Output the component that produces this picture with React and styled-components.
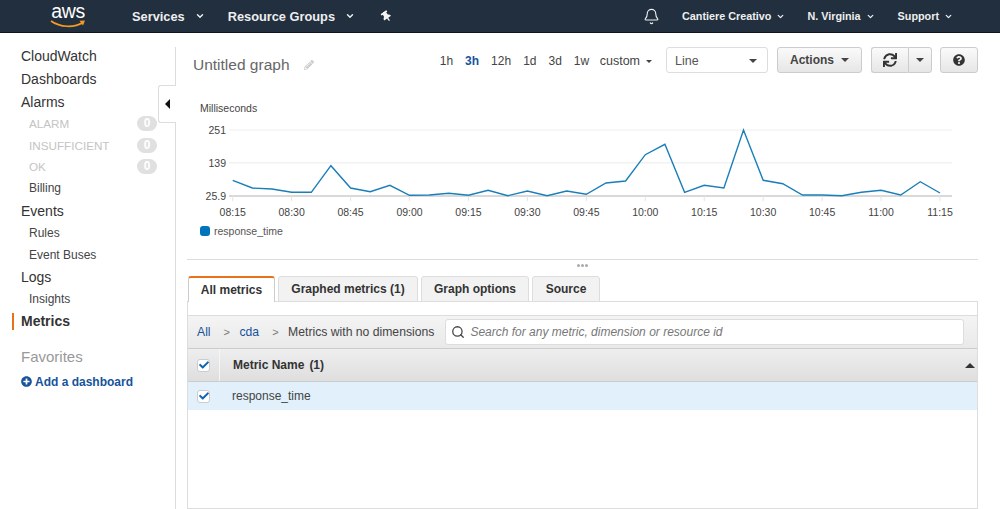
import styled, { createGlobalStyle } from 'styled-components';
import {
  FaCheck,
  FaPencilAlt,
  FaPlusCircle,
  FaQuestionCircle,
  FaSync,
  FaThumbtack,
} from 'react-icons/fa';
import { Bell, ChevronDown, Search } from 'lucide-react';

const GlobalStyle = createGlobalStyle`
  html, body {
    margin: 0;
    padding: 0;
    background: #fff;
  }
  body {
    font-family: "Liberation Sans", Arial, sans-serif;
    color: #444;
  }
`;

const Page = styled.div`
  width: 1000px;
  height: 509px;
  overflow: hidden;
  display: flex;
  flex-direction: column;
`;

const TopBar = styled.header`
  height: 32px;
  flex: none;
  display: flex;
  align-items: center;
  background: #212f3e;
  border-bottom: 1px solid #10161d;
  color: #eee;
  font-weight: bold;
`;

const Logo = styled.div`
  width: 40px;
  align-self: flex-start;
  margin: 0 44px 0 48px;
  display: flex;
  flex-direction: column;
  align-items: center;
  color: #fff;
  svg {
    display: block;
    margin-top: -4px;
  }
`;

const LogoText = styled.span`
  font-weight: normal;
  font-size: 19.5px;
  letter-spacing: -0.4px;
`;

const TopItem = styled.div`
  display: flex;
  align-items: center;
  gap: ${(p) => p.$gap || 5}px;
  margin-right: ${(p) => p.$right || 0}px;
  font-size: ${(p) => p.$size || 10.8}px;
  white-space: nowrap;
`;

const TopRight = styled.div`
  margin-left: auto;
  display: flex;
  align-items: center;
  padding-right: 47px;
`;

const PinIcon = styled(FaThumbtack)`
  width: 11px;
  height: 11px;
  color: #f4f4f4;
  transform: rotate(-35deg);
`;

const BellIcon = styled(Bell)`
  width: 17px;
  height: 17px;
  color: #eee;
  margin-right: 22px;
`;

const Body = styled.div`
  flex: 1;
  min-height: 0;
  display: flex;
`;

const Sidebar = styled.aside`
  position: relative;
  width: 175px;
  flex: none;
  margin-top: 14px;
  border-right: 1px solid #ddd;
`;

const SideList = styled.nav`
  margin-top: -2px;
  padding-right: 18px;
`;

const SideLink = styled.div`
  position: relative;
  height: 23px;
  line-height: 23px;
  padding-left: 21px;
  font-size: 14px;
  font-weight: ${(p) => (p.$active ? 'bold' : 'normal')};
  margin-top: ${(p) => (p.$active ? '-1px' : '0')};
  color: #333;

  ${(p) =>
    p.$active &&
    `
    &::before {
      content: '';
      position: absolute;
      left: 12px;
      top: 3px;
      width: 2px;
      height: 17px;
      background: #e8711a;
    }
  `}
`;

const SideGroup = styled.div`
  margin-top: -1px;
  padding-bottom: 1px;
`;

const SideSubLink = styled.div`
  height: 21.5px;
  line-height: 21.5px;
  padding-left: 29px;
  font-size: ${(p) => (p.$muted ? '11.7px' : '12px')};
  display: flex;
  align-items: center;
  justify-content: space-between;
  color: ${(p) => (p.$muted ? '#c4c4c4' : '#444')};
`;

const Badge = styled.span`
  width: 20px;
  height: 15px;
  border-radius: 8px;
  background: #e0e0e0;
  color: #fff;
  font-size: 12px;
  font-weight: bold;
  line-height: 15px;
  text-align: center;
`;

const FavoritesTitle = styled.div`
  margin-top: 12px;
  height: 23px;
  line-height: 23px;
  padding-left: 21px;
  font-size: 15px;
  color: #999;
`;

const AddLink = styled.div`
  margin-top: 5px;
  padding-left: 21px;
  height: 18px;
  display: flex;
  align-items: center;
  gap: 3px;
  font-size: 12px;
  font-weight: bold;
  color: #16539b;
  svg {
    width: 11px;
    height: 11px;
  }
`;

const CollapseTab = styled.div`
  position: absolute;
  top: 38px;
  right: -1px;
  width: 17px;
  height: 36px;
  background: #fff;
  border: 1px solid #ddd;
  border-right: none;
  border-radius: 3px 0 0 3px;
  display: flex;
  align-items: center;
  justify-content: center;
  &::after {
    content: '';
    border-top: 5px solid transparent;
    border-bottom: 5px solid transparent;
    border-right: 5px solid #111;
  }
`;

const Main = styled.main`
  flex: 1;
  min-width: 0;
  padding: 14px 22px 0 11px;
  display: flex;
  flex-direction: column;
`;

const Toolbar = styled.div`
  height: 26px;
  display: flex;
  align-items: center;
  justify-content: space-between;
`;

const TitleGroup = styled.div`
  padding-left: 6px;
  display: flex;
  align-items: center;
  gap: 14px;
  margin-top: 9px;
  color: #666;
  font-size: 15.5px;
  svg {
    width: 10px;
    height: 10px;
    color: #ccc;
  }
`;

const Controls = styled.div`
  display: flex;
  align-items: center;
`;

const TimeRange = styled.div`
  display: flex;
  align-items: center;
  gap: 12px;
  margin-right: 14px;
  padding-top: 2px;
  font-size: 12px;
  color: #444;
`;

const TimeOption = styled.span`
  font-weight: ${(p) => (p.$active ? 'bold' : 'normal')};
  color: ${(p) => (p.$active ? '#16539b' : '#444')};
`;

const Caret = styled.span`
  display: inline-block;
  width: 0;
  height: 0;
  border-left: ${(p) => p.$size || 4}px solid transparent;
  border-right: ${(p) => p.$size || 4}px solid transparent;
  border-top: ${(p) => p.$size || 4}px solid ${(p) => p.$color || '#444'};
`;

const CustomRange = styled.span`
  margin-left: -1.5px;
  display: flex;
  align-items: center;
  gap: 6px;
  font-size: 12.5px;
`;

const SelectBox = styled.div`
  width: 102px;
  height: 26px;
  box-sizing: border-box;
  margin-right: 9px;
  padding: 2px 10px 0 8px;
  display: flex;
  align-items: center;
  justify-content: space-between;
  background: #fff;
  border: 1px solid #ddd;
  border-radius: 3px;
  font-size: 12.5px;
  color: #555;
`;

const Button = styled.div`
  width: ${(p) => p.$width}px;
  height: 26px;
  box-sizing: border-box;
  margin-right: ${(p) => p.$right || 0}px;
  display: flex;
  align-items: center;
  justify-content: center;
  gap: 7px;
  background: linear-gradient(#fafafa, #e6e6e6);
  border: 1px solid #ccc;
  border-radius: ${(p) => p.$radius || '3px'};
  font-size: 12px;
  font-weight: bold;
  color: #444;
  svg {
    width: ${(p) => p.$icon || 12}px;
    height: ${(p) => p.$icon || 12}px;
    color: #333;
  }
`;

const SplitLeft = styled(Button)`
  border-right: none;
  border-radius: 3px 0 0 3px;
`;

const SplitRight = styled(Button)`
  border-radius: 0 3px 3px 0;
`;

const AxisTitle = styled.div`
  margin-top: 28px;
  padding-left: 13px;
  height: 14px;
  line-height: 14px;
  font-size: 10.5px;
  color: #444;
`;

const ChartSvg = styled.svg`
  display: block;
  width: 791px;
  height: 105px;
  flex: none;

  text {
    font-family: "Liberation Sans", Arial, sans-serif;
    font-size: 10.5px;
    fill: #444;
  }
`;

const Legend = styled.div`
  margin-top: 4px;
  padding-left: 13px;
  height: 14px;
  display: flex;
  align-items: center;
  gap: 4px;
  font-size: 10.5px;
  color: #555;
`;

const LegendSwatch = styled.span`
  width: 10px;
  height: 10px;
  border-radius: 3px;
  background: #0073bb;
`;

const Divider = styled.div`
  margin-top: 21px;
  height: 1px;
  flex: none;
  background: #ddd;
`;

const ResizeHandle = styled.div`
  height: 16px;
  flex: none;
  display: flex;
  justify-content: center;
  align-items: center;
  gap: 1px;
  padding-bottom: 6px;
  box-sizing: border-box;
`;

const HandleDot = styled.span`
  width: 3px;
  height: 3px;
  border-radius: 50%;
  background: #aaa;
`;

const TabRow = styled.div`
  height: 26px;
  flex: none;
  padding-left: 1px;
  display: flex;
  gap: 3px;
  position: relative;
  z-index: 1;
`;

const Tab = styled.div`
  width: ${(p) => p.$width}px;
  box-sizing: border-box;
  display: flex;
  align-items: center;
  justify-content: center;
  font-size: 12px;
  font-weight: bold;
  color: #333;
  background: ${(p) => (p.$active ? '#fff' : '#f2f2f2')};
  border: 1px solid ${(p) => (p.$active ? '#ccc' : '#ddd')};
  border-top: ${(p) => (p.$active ? '2px solid #e8711a' : '1px solid #ddd')};
  border-bottom: ${(p) => (p.$active ? 'none' : '1px solid #ddd')};
  border-radius: 3px 3px 0 0;
`;

const Panel = styled.section`
  flex: 1;
  margin-top: -1px;
  padding-top: 13px;
  border: 1px solid #ddd;
  display: flex;
  flex-direction: column;
`;

const CrumbBar = styled.div`
  height: 34px;
  flex: none;
  box-sizing: border-box;
  padding: 0 13px 0 9px;
  display: flex;
  align-items: center;
  background: linear-gradient(#f4f4f4, #e9e9e9);
  border-top: 1px solid #ddd;
  border-bottom: 1px solid #ccc;
  font-size: 12.2px;
  color: #444;
`;

const CrumbLink = styled.span`
  color: #16539b;
`;

const CrumbSep = styled.span`
  margin: 0 9.5px 0 13px;
  color: #777;
  font-size: 11px;
`;

const SearchBox = styled.div`
  flex: 1;
  height: 26px;
  margin-left: 11px;
  box-sizing: border-box;
  padding-left: 5px;
  display: flex;
  align-items: center;
  gap: 5px;
  background: #fff;
  border: 1px solid #ddd;
  border-radius: 3px;
  font-size: 12px;
  font-style: italic;
  color: #777;
  svg {
    width: 14px;
    height: 14px;
    color: #444;
  }
`;

const HeadRow = styled.div`
  height: 33px;
  flex: none;
  box-sizing: border-box;
  display: flex;
  align-items: center;
  background: linear-gradient(#eeeeee, #dedede);
  border-bottom: 1px solid #ccc;
  font-size: 12px;
  font-weight: bold;
  color: #333;
`;

const CheckCell = styled.div`
  width: 31px;
  height: 100%;
  flex: none;
  display: flex;
  align-items: center;
  justify-content: center;
  border-right: ${(p) => (p.$divided ? '1px solid #f6f6f6' : 'none')};
`;

const CheckBox = styled.span`
  width: 13px;
  height: 13px;
  box-sizing: border-box;
  display: flex;
  align-items: center;
  justify-content: center;
  background: #fff;
  border: 1px solid #ccc;
  border-radius: 3px;
  svg {
    width: 10px;
    height: 10px;
    color: #0b64b4;
  }
`;

const HeadLabel = styled.div`
  flex: 1;
  padding-left: 13px;
  display: flex;
  gap: 5px;
`;

const SortCaret = styled.span`
  margin-right: 2px;
  width: 0;
  height: 0;
  border-left: 5px solid transparent;
  border-right: 5px solid transparent;
  border-bottom: 5px solid #333;
`;

const MetricRow = styled.div`
  height: 28px;
  flex: none;
  display: flex;
  align-items: center;
  background: #e1f0fb;
  font-size: 12px;
  color: #444;
`;

const MetricName = styled.span`
  padding-left: 13px;
`;

// page coordinates, one point every 5 minutes from 08:15
const series = [
  180.3, 188, 189, 192.3, 192.3, 165.7, 188, 191.7, 185.3, 195.3, 195, 193.3,
  195.3, 190.3, 195.7, 191, 195.7, 191, 194.3, 183, 181, 154.7, 144.3, 192.3,
  185.3, 188, 130, 180.3, 183.7, 195, 195, 195.7, 192.3, 190.3, 195, 181.7, 193,
];
const stepX = 19.647;
const startX = 232.7;
const linePoints = series
  .map((y, i) => `${(startX + i * stepX).toFixed(1)},${y}`)
  .join(' ');
const hours = [
  '08:15', '08:30', '08:45', '09:00', '09:15', '09:30', '09:45',
  '10:00', '10:15', '10:30', '10:45', '11:00', '11:15',
];

const Chart = () => (
  <ChartSvg viewBox="187 115 791 105">
    <line x1="229" x2="952" y1="130" y2="130" stroke="#eeeeee" />
    <line x1="229" x2="952" y1="162.7" y2="162.7" stroke="#f2f2f2" strokeWidth="1.5" />
    <line x1="229" x2="952" y1="196" y2="196" stroke="#cccccc" strokeWidth="1.5" />
    <text x="226" y="134" textAnchor="end">251</text>
    <text x="226" y="167" textAnchor="end">139</text>
    <text x="226" y="200" textAnchor="end">25.9</text>
    {hours.map((h, i) => {
      const x = startX + i * 3 * stepX;
      return (
        <g key={h}>
          <line x1={x} x2={x} y1="196" y2="201" stroke="#e4e4e4" />
          <text x={x} y="216" textAnchor="middle">{h}</text>
        </g>
      );
    })}
    <polyline points={linePoints} fill="none" stroke="#1a7fb9" strokeWidth="1.4" />
  </ChartSvg>
);

const App = () => {
  return (
    <Page>
      <GlobalStyle />
      <TopBar>
        <Logo>
          <LogoText>aws</LogoText>
          <svg width="36" height="10" viewBox="0 0 36 10">
            <path d="M1 2 C10 8.5 24 9 33 3.5" fill="none" stroke="#f29a24" strokeWidth="1.7" />
            <path d="M29.5 1.8 L35 1.5 L33 6.5 Z" fill="#f29a24" />
          </svg>
        </Logo>
        <TopItem $size={12.8} $gap={10} $right={23}>
          Services <ChevronDown size={10} strokeWidth={3.5} />
        </TopItem>
        <TopItem $size={12.8} $gap={10} $right={26}>
          Resource Groups <ChevronDown size={10} strokeWidth={3.5} />
        </TopItem>
        <PinIcon />
        <TopRight>
          <BellIcon strokeWidth={1.6} />
          <TopItem $right={22}>
            Cantiere Creativo <ChevronDown size={9} strokeWidth={3.5} />
          </TopItem>
          <TopItem $right={23}>
            N. Virginia <ChevronDown size={9} strokeWidth={3.5} />
          </TopItem>
          <TopItem>
            Support <ChevronDown size={9} strokeWidth={3.5} />
          </TopItem>
        </TopRight>
      </TopBar>
      <Body>
        <Sidebar>
          <SideList>
            <SideLink>CloudWatch</SideLink>
            <SideLink>Dashboards</SideLink>
            <SideLink>Alarms</SideLink>
            <SideGroup>
              <SideSubLink $muted>ALARM <Badge>0</Badge></SideSubLink>
              <SideSubLink $muted>INSUFFICIENT <Badge>0</Badge></SideSubLink>
              <SideSubLink $muted>OK <Badge>0</Badge></SideSubLink>
              <SideSubLink>Billing</SideSubLink>
            </SideGroup>
            <SideLink>Events</SideLink>
            <SideSubLink>Rules</SideSubLink>
            <SideSubLink>Event Buses</SideSubLink>
            <SideLink>Logs</SideLink>
            <SideSubLink>Insights</SideSubLink>
            <SideLink $active>Metrics</SideLink>
            <FavoritesTitle>Favorites</FavoritesTitle>
            <AddLink><FaPlusCircle /> Add a dashboard</AddLink>
          </SideList>
          <CollapseTab />
        </Sidebar>
        <Main>
          <Toolbar>
            <TitleGroup>
              Untitled graph <FaPencilAlt />
            </TitleGroup>
            <Controls>
              <TimeRange>
                <TimeOption>1h</TimeOption>
                <TimeOption $active>3h</TimeOption>
                <TimeOption>12h</TimeOption>
                <TimeOption>1d</TimeOption>
                <TimeOption>3d</TimeOption>
                <TimeOption>1w</TimeOption>
                <CustomRange>custom <Caret $size={3} /></CustomRange>
              </TimeRange>
              <SelectBox>Line <Caret /></SelectBox>
              <Button $width={85} $right={9}>Actions <Caret /></Button>
              <SplitLeft $width={37} $icon={14}><FaSync /></SplitLeft>
              <SplitRight $width={24} $right={8}><Caret /></SplitRight>
              <Button $width={38}><FaQuestionCircle /></Button>
            </Controls>
          </Toolbar>
          <AxisTitle>Milliseconds</AxisTitle>
          <Chart />
          <Legend><LegendSwatch /> response_time</Legend>
          <Divider />
          <ResizeHandle><HandleDot /><HandleDot /><HandleDot /></ResizeHandle>
          <TabRow>
            <Tab $active $width={87}>All metrics</Tab>
            <Tab $width={140}>Graphed metrics (1)</Tab>
            <Tab $width={108}>Graph options</Tab>
            <Tab $width={68}>Source</Tab>
          </TabRow>
          <Panel>
            <CrumbBar>
              <CrumbLink>All</CrumbLink>
              <CrumbSep>&gt;</CrumbSep>
              <CrumbLink>cda</CrumbLink>
              <CrumbSep>&gt;</CrumbSep>
              <span>Metrics with no dimensions</span>
              <SearchBox>
                <Search strokeWidth={2.2} />
                Search for any metric, dimension or resource id
              </SearchBox>
            </CrumbBar>
            <HeadRow>
              <CheckCell $divided><CheckBox><FaCheck /></CheckBox></CheckCell>
              <HeadLabel>Metric Name <span>(1)</span></HeadLabel>
              <SortCaret />
            </HeadRow>
            <MetricRow>
              <CheckCell><CheckBox><FaCheck /></CheckBox></CheckCell>
              <MetricName>response_time</MetricName>
            </MetricRow>
          </Panel>
        </Main>
      </Body>
    </Page>
  );
};

export default App;
